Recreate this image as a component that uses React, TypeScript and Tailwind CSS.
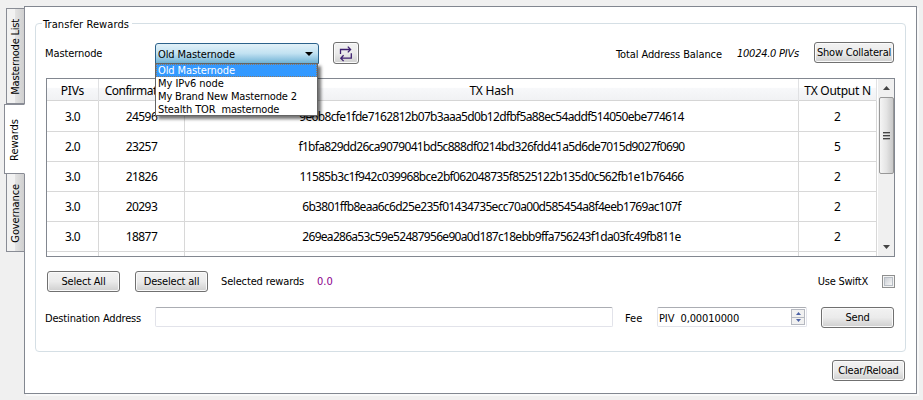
import type { ReactNode } from 'react';

const ui = "font-['DejaVu_Sans_Condensed','DejaVu_Sans',sans-serif] [font-stretch:condensed]";

const rows = [
  ['3.0', '24596', '9e6b8cfe1fde7162812b07b3aaa5d0b12dfbf5a88ec54addf514050ebe774614', '2', 'tracking-[-0.68px]'],
  ['2.0', '23257', 'f1bfa829dd26ca9079041bd5c888df0214bd326fdd41a5d6de7015d9027f0690', '5', 'tracking-[-0.68px]'],
  ['3.0', '21826', '11585b3c1f942c039968bce2bf062048735f8525122b135d0c562fb1e1b76466', '2', 'tracking-[-0.68px]'],
  ['3.0', '20293', '6b3801ffb8eaa6c6d25e235f01434735ecc70a00d585454a8f4eeb1769ac107f', '2', 'tracking-[-0.69px]'],
  ['3.0', '18877', '269ea286a53c59e52487956e90a0d187c18ebb9ffa756243f1da03fc49fb811e', '2', 'tracking-[-0.71px]'],
];

const nodes = [
  ['Old Masternode', 'tracking-[-0.1px]'],
  ['My IPv6 node', 'tracking-[-0.05px]'],
  ['My Brand New Masternode 2', 'tracking-[-0.15px]'],
  ['Stealth TOR  masternode', 'tracking-[-0.15px]'],
];

function Button({ className, children }: { className: string; children: ReactNode }) {
  return (
    <button
      className={`flex h-[21px] shrink-0 items-center justify-center whitespace-pre rounded-[3px] border border-[#707070] bg-linear-to-b from-[#f2f2f2] from-0% via-[#ebebeb] via-50% to-[#cfcfcf] to-100% tracking-[-0.2px] shadow-[inset_0_0_0_1px_#fafafa] ${className}`}
    >
      {children}
    </button>
  );
}

function Tab({ className, children }: { className: string; children: ReactNode }) {
  return (
    <div className={`flex items-center justify-center border border-[#898c95] ${className}`}>
      <span className="rotate-180 whitespace-nowrap [writing-mode:vertical-rl]">{children}</span>
    </div>
  );
}

export default function App() {
  return (
    <div className={`flex h-[400px] w-[923px] overflow-hidden bg-[#f0f0f0] text-[11px] leading-[13px] text-black ${ui}`}>
      <div className="z-10 flex w-[25px] shrink-0 flex-col items-end pt-2">
        <Tab className="h-[96px] w-[19px] bg-linear-to-r from-[#f2f2f2] from-45% via-[#e2e2e2] via-50% to-[#cfcfcf] pt-px tracking-[-0.2px]">Masternode List</Tab>
        <Tab className="h-[70px] w-[21px] border-r-white bg-white pt-[2px]">Rewards</Tab>
        <Tab className="h-[78px] w-[19px] border-t-0 bg-linear-to-r from-[#f2f2f2] from-45% via-[#e2e2e2] via-50% to-[#cfcfcf] pt-[2px] tracking-[-0.1px]">Governance</Tab>
      </div>

      <main className="-ml-px mt-[6px] flex h-[388px] w-[893px] shrink-0 flex-col border border-[#828790] bg-white pl-[10px] pr-[11px] pt-[10px] shadow-[2px_2px_0_#f9f9f9]">
        <fieldset className="h-[335px] w-[871px] shrink-0 rounded-[4px] border border-[#d5dfe5] px-[10px]">
          <legend className="-ml-[4px] h-[13px] w-[90px] whitespace-nowrap pl-px pt-px tracking-[0.08px]">Transfer Rewards</legend>

          <div className="mt-[13px] flex h-[22px]">
            <span className="-ml-px w-[109px] pt-[4px] tracking-[-0.1px]">Masternode</span>
            <div className="relative ml-px h-[21px] w-[164px]">
              <div className="flex h-[21px] items-center justify-between rounded-t-[3px] border border-[#2c628b] bg-linear-to-b from-[#e2f1f8] from-0% via-[#c2e2f2] via-49% to-[#70b3d6] to-100% pl-[2px] pr-[5px] pt-px">
                <span className="tracking-[-0.1px]">Old Masternode</span>
                <svg width="8" height="4" viewBox="0 0 8 4"><path d="M0 0h8L4 4z" /></svg>
              </div>
              <div className="absolute left-0 top-[20px] z-20 h-[53px] w-[163px] border border-[#646464] bg-white shadow-[3px_3px_3px_rgba(0,0,0,0.55)]">
                {nodes.map(([name, spacing], i) => (
                  <div
                    key={name}
                    className={`h-[13px] whitespace-pre pl-[2px] leading-[13px] ${spacing} ${i === 0 ? 'bg-[#3399ff] text-white outline-1 -outline-offset-1 outline-dotted outline-[#cc6600]/60' : ''}`}
                  >
                    {name}
                  </div>
                ))}
              </div>
            </div>
            <Button className="-mt-px ml-[14px] !h-[22px] w-[26px]">
              <svg width="14" height="17" viewBox="0 0 14 17" fill="none" stroke="#3d1f70" strokeWidth="1.3">
                <path d="M1.5 9V4.5H11.5M8.8 1.6l2.8 2.9L8.8 7.4M12.3 8.2v5H2.2M4.6 10.3l-2.8 2.9 2.8 2.9" />
              </svg>
            </Button>
            <div className="ml-auto flex pr-px">
              <span className="w-[121px] pt-[5px] tracking-[-0.1px]">Total Address Balance</span>
              <span className="w-[77px] whitespace-nowrap pt-[4px] italic tracking-[-0.25px]">10024.0 PIVs</span>
              <Button className="-mt-px w-[80px] !tracking-[-0.2px]">Show Collateral</Button>
            </div>
          </div>

          <div className="mt-[13px] flex h-[179px] w-[849px] border border-[#828790] bg-white font-['Noto_Sans',sans-serif] text-[12px] [font-stretch:normal]">
            <div className="flex w-[830px] flex-col overflow-hidden">
              <div className="grid h-[22px] shrink-0 grid-cols-[52px_86px_614px_78px] border-b border-[#d5d5d5] bg-linear-to-b from-white from-40% via-[#f7f8fa] via-45% to-[#f1f2f4] text-center leading-[23px]">
                <span className="border-r border-[#e0e1e3] tracking-[-0.2px]">PIVs</span>
                <span className="overflow-hidden whitespace-nowrap border-r border-[#e0e1e3] tracking-[-0.5px]">Confirmations</span>
                <span className="border-r border-[#e0e1e3] tracking-[-0.2px]">TX Hash</span>
                <span className="whitespace-nowrap border-r border-[#e0e1e3] tracking-[-0.25px]">TX Output N</span>
              </div>
              {rows.map(([amount, confirmations, hash, output, spacing], i) => (
                <div
                  key={hash}
                  className={`grid shrink-0 grid-cols-[52px_86px_614px_78px] border-b border-[#d8d8d8] text-center ${i === 0 ? 'h-[31px] leading-[31px]' : 'h-[30px] leading-[30px]'}`}
                >
                  <span className="border-r border-[#d8d8d8] tracking-[-0.6px]">{amount}</span>
                  <span className="border-r border-[#d8d8d8] tracking-[-0.6px]">{confirmations}</span>
                  <span className={`whitespace-nowrap border-r border-[#d8d8d8] ${spacing}`}>{hash}</span>
                  <span className="border-r border-[#d8d8d8]">{output}</span>
                </div>
              ))}
              <div className="grid h-[5px] shrink-0 grid-cols-[52px_86px_614px_78px]">
                <span className="border-r border-[#d8d8d8]" /><span className="border-r border-[#d8d8d8]" />
                <span className="border-r border-[#d8d8d8]" /><span className="border-r border-[#d8d8d8]" />
              </div>
            </div>
            <div className="ml-px flex w-[16px] flex-col items-center bg-[#f0f0f0]">
              <svg className="mt-[7px]" width="7" height="4" viewBox="0 0 7 4"><path d="M3.5 0L7 4H0z" fill="#444" /></svg>
              <div className="mt-[7px] flex h-[77px] w-[15px] flex-col items-center justify-center gap-[2px] rounded-[2px] border border-[#989898] bg-linear-to-r from-[#f5f5f5] from-0% via-[#e4e4e4] via-50% to-[#c8c8c8] to-100%">
                <i className="h-px w-[7px] bg-[#444] shadow-[0_1px_0_#aaa]" />
                <i className="h-px w-[7px] bg-[#444] shadow-[0_1px_0_#aaa]" />
                <i className="h-px w-[7px] bg-[#444] shadow-[0_1px_0_#aaa]" />
              </div>
              <svg className="mb-[7px] mt-auto" width="7" height="4" viewBox="0 0 7 4"><path d="M0 0h7L3.5 4z" fill="#444" /></svg>
            </div>
          </div>

          <div className="mt-[14px] flex h-[21px] items-center pl-px">
            <Button className="w-[73px]">Select All</Button>
            <Button className="ml-[15px] w-[73px]">Deselect all</Button>
            <span className="ml-[13px] w-[96px] tracking-[-0.15px]">Selected rewards</span>
            <span className="text-[#8b008b]">0.0</span>
            <span className="ml-auto whitespace-nowrap pr-[14px] tracking-[-0.25px]">Use SwiftX</span>
            <span className="flex size-[13px] items-center justify-center border border-[#8e8f8f] bg-[#f4f4f4]">
              <i className="size-[9px] border border-[#b8bec5] bg-linear-to-br from-[#cbcfd5] to-[#f6f6f6]" />
            </span>
          </div>

          <div className="mt-[15px] flex h-[21px] items-start">
            <span className="-ml-px w-[110px] whitespace-nowrap pt-[5px] tracking-[-0.17px]">Destination Address</span>
            <input className="h-[20px] w-[458px] rounded-[2px] border border-[#e2e3ea] border-t-[#abadb3] bg-white" aria-label="Destination Address" />
            <span className="ml-[12px] w-[32px] pt-[5px]">Fee</span>
            <div className="flex h-[20px] w-[150px] items-center justify-between rounded-[2px] border border-[#e2e3ea] border-t-[#abadb3] pl-px pr-px">
              <span className="whitespace-pre pt-[2px] tracking-[-0.1px]">PIV  0,00010000</span>
              <span className="flex h-[16px] w-[14px] flex-col border border-[#b5b8c0] bg-[#f1f1f1]">
                <i className="flex flex-1 items-center justify-center border-b border-[#b5b8c0]"><svg width="5" height="3" viewBox="0 0 5 3"><path d="M2.5 0L5 3H0z" fill="#4a61a5" /></svg></i>
                <i className="flex flex-1 items-center justify-center"><svg width="5" height="3" viewBox="0 0 5 3"><path d="M0 0h5L2.5 3z" fill="#4a61a5" /></svg></i>
              </span>
            </div>
            <Button className="ml-[14px] w-[73px]">Send</Button>
          </div>
        </fieldset>
        <Button className="mt-[8px] w-[73px] self-end">Clear/Reload</Button>
      </main>
    </div>
  );
}
